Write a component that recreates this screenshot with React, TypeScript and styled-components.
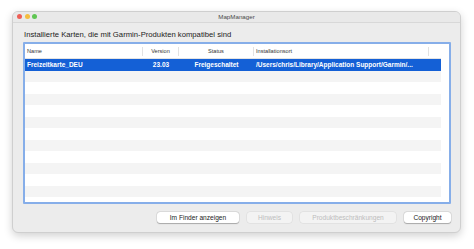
import React from "react";
import styled, { createGlobalStyle } from "styled-components";

const Global = createGlobalStyle`
  html, body { margin: 0; padding: 0; background: #ffffff; }
  body { font-family: "Liberation Sans", Arial, sans-serif; }
`;

const Page = styled.div`
  width: 474px;
  height: 249px;
  padding: 11px 0 0 12px;
  box-sizing: border-box;
`;

const Window = styled.div`
  width: 449px;
  height: 222px;
  box-sizing: border-box;
  background: #ececec;
  border: 1px solid #cfcfcf;
  border-radius: 6px;
  box-shadow: 0 3px 9px rgba(0, 0, 0, 0.18);
  display: flex;
  flex-direction: column;
  overflow: hidden;
`;

const TitleBar = styled.div`
  height: 10px;
  flex: none;
  border-bottom: 1px solid #d8d8d8;
  background: #e9e9e9;
  position: relative;
  display: flex;
  align-items: center;
  justify-content: center;
`;

const Lights = styled.div`
  position: absolute;
  left: 4px;
  top: 2px;
  display: flex;
  gap: 2.5px;
`;

const Light = styled.span<{ $c: string }>`
  width: 5px;
  height: 5px;
  border-radius: 50%;
  background: ${(p) => p.$c};
`;

const Title = styled.div`
  font-size: 6.2px;
  color: #4a4a4a;
  line-height: 1;
`;

const Body = styled.div`
  flex: 1;
  display: flex;
  flex-direction: column;
  padding: 7px 9px 0 10px;
`;

const Caption = styled.div`
  font-size: 7.7px;
  color: #222;
  line-height: 9px;
  margin-left: 1px;
  margin-bottom: 3px;
`;

const TableBox = styled.div`
  height: 162px;
  box-sizing: border-box;
  border: 2px solid #86aee9;
  border-radius: 1px;
  background: #fff;
  display: flex;
  flex-direction: column;
  padding-right: 8px;
`;

const cols = "118px 36px 75px 175px 1fr";

const HeaderRow = styled.div`
  display: grid;
  grid-template-columns: ${cols};
  height: 14px;
  align-items: center;
  border-bottom: 1px solid #e4e4e4;
  flex: none;
`;

const HeadCell = styled.div<{ $align?: string; $last?: boolean }>`
  font-size: 5.6px;
  color: #333;
  text-align: ${(p) => p.$align || "left"};
  padding-left: ${(p) => (p.$align === "center" ? "0" : "2px")};
  border-right: ${(p) => (p.$last ? "none" : "1px solid #e2e2e2")};
  height: 9px;
  line-height: 9px;
`;

const Row = styled.div<{ $sel?: boolean; $alt?: boolean }>`
  display: grid;
  grid-template-columns: ${cols};
  height: 11.5px;
  align-items: center;
  flex: none;
  background: ${(p) => (p.$sel ? "#1460d6" : p.$alt ? "#f4f4f4" : "#ffffff")};
  color: ${(p) => (p.$sel ? "#ffffff" : "#222")};
`;

const Cell = styled.div<{ $align?: string }>`
  font-size: 6.5px;
  font-weight: bold;
  text-align: ${(p) => p.$align || "left"};
  padding-left: ${(p) => (p.$align === "center" ? "0" : "2px")};
  white-space: nowrap;
  overflow: hidden;
  line-height: 11px;
`;

const Footer = styled.div`
  display: flex;
  justify-content: flex-end;
  gap: 8px;
  margin-top: 8px;
`;

const Button = styled.div<{ $disabled?: boolean; $w: number }>`
  width: ${(p) => p.$w}px;
  height: 11px;
  box-sizing: border-box;
  border-radius: 3px;
  background: ${(p) => (p.$disabled ? "#f3f3f3" : "#ffffff")};
  box-shadow: ${(p) => (p.$disabled ? "0 0 0 0.5px rgba(0,0,0,0.08)" : "0 0.5px 1px rgba(0,0,0,0.25), 0 0 0 0.5px rgba(0,0,0,0.1)")};
  color: ${(p) => (p.$disabled ? "#bdbdbd" : "#222")};
  font-size: 6.6px;
  line-height: 11px;
  text-align: center;
  white-space: nowrap;
`;

export default function App() {
  const emptyRows = Array.from({ length: 11 }, (_, i) => i);
  return (
    <>
      <Global />
      <Page>
        <Window>
          <TitleBar>
            <Lights>
              <Light $c="#ee5f57" />
              <Light $c="#f4bd3f" />
              <Light $c="#5fc653" />
            </Lights>
            <Title>MapManager</Title>
          </TitleBar>
          <Body>
            <Caption>Installierte Karten, die mit Garmin-Produkten kompatibel sind</Caption>
            <TableBox>
              <HeaderRow>
                <HeadCell>Name</HeadCell>
                <HeadCell $align="center">Version</HeadCell>
                <HeadCell $align="center">Status</HeadCell>
                <HeadCell>Installationsort</HeadCell>
                <HeadCell $last />
              </HeaderRow>
              <Row $sel>
                <Cell>Freizeitkarte_DEU</Cell>
                <Cell $align="center">23.03</Cell>
                <Cell $align="center">Freigeschaltet</Cell>
                <Cell>/Users/chris/Library/Application Support/Garmin/...</Cell>
                <Cell />
              </Row>
              {emptyRows.map((i) => (
                <Row key={i} $alt={i % 2 === 0} />
              ))}
            </TableBox>
            <Footer>
              <Button $w={82}>Im Finder anzeigen</Button>
              <Button $w={45} $disabled>Hinweis</Button>
              <Button $w={96} $disabled>Produktbeschränkungen</Button>
              <Button $w={47}>Copyright</Button>
            </Footer>
          </Body>
        </Window>
      </Page>
    </>
  );
}
